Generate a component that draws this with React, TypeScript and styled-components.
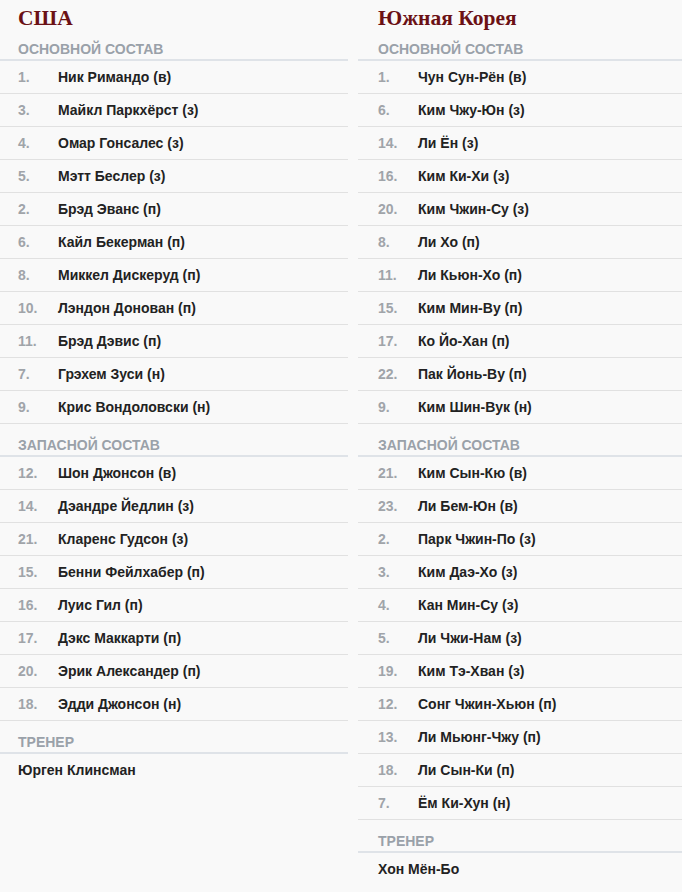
import React from "react";
import styled, { createGlobalStyle } from "styled-components";

type Player = { num: number; name: string };

type Team = {
  country: string;
  starters: Player[];
  subs: Player[];
  coach: string;
};

const teams: Team[] = [
  {
    country: "США",
    starters: [
      { num: 1, name: "Ник Римандо (в)" },
      { num: 3, name: "Майкл Паркхёрст (з)" },
      { num: 4, name: "Омар Гонсалес (з)" },
      { num: 5, name: "Мэтт Беслер (з)" },
      { num: 2, name: "Брэд Эванс (п)" },
      { num: 6, name: "Кайл Бекерман (п)" },
      { num: 8, name: "Миккел Дискеруд (п)" },
      { num: 10, name: "Лэндон Донован (п)" },
      { num: 11, name: "Брэд Дэвис (п)" },
      { num: 7, name: "Грэхем Зуси (н)" },
      { num: 9, name: "Крис Вондоловски (н)" },
    ],
    subs: [
      { num: 12, name: "Шон Джонсон (в)" },
      { num: 14, name: "Дэандре Йедлин (з)" },
      { num: 21, name: "Кларенс Гудсон (з)" },
      { num: 15, name: "Бенни Фейлхабер (п)" },
      { num: 16, name: "Луис Гил (п)" },
      { num: 17, name: "Дэкс Маккарти (п)" },
      { num: 20, name: "Эрик Александер (п)" },
      { num: 18, name: "Эдди Джонсон (н)" },
    ],
    coach: "Юрген Клинсман",
  },
  {
    country: "Южная Корея",
    starters: [
      { num: 1, name: "Чун Сун-Рён (в)" },
      { num: 6, name: "Ким Чжу-Юн (з)" },
      { num: 14, name: "Ли Ён (з)" },
      { num: 16, name: "Ким Ки-Хи (з)" },
      { num: 20, name: "Ким Чжин-Су (з)" },
      { num: 8, name: "Ли Хо (п)" },
      { num: 11, name: "Ли Кьюн-Хо (п)" },
      { num: 15, name: "Ким Мин-Ву (п)" },
      { num: 17, name: "Ко Йо-Хан (п)" },
      { num: 22, name: "Пак Йонь-Ву (п)" },
      { num: 9, name: "Ким Шин-Вук (н)" },
    ],
    subs: [
      { num: 21, name: "Ким Сын-Кю (в)" },
      { num: 23, name: "Ли Бем-Юн (в)" },
      { num: 2, name: "Парк Чжин-По (з)" },
      { num: 3, name: "Ким Даэ-Хо (з)" },
      { num: 4, name: "Кан Мин-Су (з)" },
      { num: 5, name: "Ли Чжи-Нам (з)" },
      { num: 19, name: "Ким Тэ-Хван (з)" },
      { num: 12, name: "Сонг Чжин-Хьюн (п)" },
      { num: 13, name: "Ли Мьюнг-Чжу (п)" },
      { num: 18, name: "Ли Сын-Ки (п)" },
      { num: 7, name: "Ём Ки-Хун (н)" },
    ],
    coach: "Хон Мён-Бо",
  },
];

function PlayerList({ players, indent }: { players: Player[]; indent: number }) {
  return (
    <List>
      {players.map((p) => (
        <Row key={p.num} $indent={indent}>
          <Num>{p.num}.</Num>
          <Name>{p.name}</Name>
        </Row>
      ))}
    </List>
  );
}

export default function App() {
  return (
    <>
      <GlobalStyle />
      <Page>
        {teams.map((team, i) => {
          const indent = i === 0 ? 18 : 20;
          return (
            <Column key={team.country}>
              <Country $indent={indent}>{team.country}</Country>
              <SectionLabel $indent={indent}>Основной состав</SectionLabel>
              <PlayerList players={team.starters} indent={indent} />
              <SectionLabel $indent={indent}>Запасной состав</SectionLabel>
              <PlayerList players={team.subs} indent={indent} />
              <SectionLabel $indent={indent}>Тренер</SectionLabel>
              <Coach $indent={indent}>{team.coach}</Coach>
            </Column>
          );
        })}
      </Page>
    </>
  );
}

const GlobalStyle = createGlobalStyle`
  html, body {
    margin: 0;
    padding: 0;
    background: #f9f9f9;
  }
  body {
    font-family: "Liberation Sans", Arial, sans-serif;
    color: #222;
  }
`;

const Page = styled.div`
  display: grid;
  grid-template-columns: 348px 324px;
  column-gap: 10px;
  width: 682px;
  min-height: 892px;
  background: #f9f9f9;
`;

const Column = styled.div`
  display: flex;
  flex-direction: column;
`;

const Country = styled.h2<{ $indent: number }>`
  margin: 0;
  padding: 6px 0 0 ${(p) => p.$indent}px;
  height: 22px;
  font-family: "Liberation Serif", "Times New Roman", serif;
  font-size: 21.5px;
  line-height: 24px;
  font-weight: bold;
  color: #6b1115;
`;

const SectionLabel = styled.div<{ $indent: number }>`
  padding: 13px 0 2px ${(p) => p.$indent}px;
  height: 16px;
  line-height: 16px;
  font-size: 14px;
  font-weight: bold;
  text-transform: uppercase;
  color: #9aa1a9;
  border-bottom: 2px solid #dfe3e8;
`;

const List = styled.div`
  display: flex;
  flex-direction: column;
`;

const Row = styled.div<{ $indent: number }>`
  display: flex;
  align-items: center;
  height: 32px;
  padding-left: ${(p) => p.$indent}px;
  border-bottom: 1px solid #e1e1e1;
  font-size: 14px;
  font-weight: bold;
`;

const Num = styled.span`
  width: 40px;
  flex: none;
  color: #a0a4a9;
`;

const Name = styled.span`
  color: #222;
`;

const Coach = styled.div<{ $indent: number }>`
  display: flex;
  align-items: center;
  height: 32px;
  padding-left: ${(p) => p.$indent}px;
  font-size: 14px;
  font-weight: bold;
  color: #222;
`;
